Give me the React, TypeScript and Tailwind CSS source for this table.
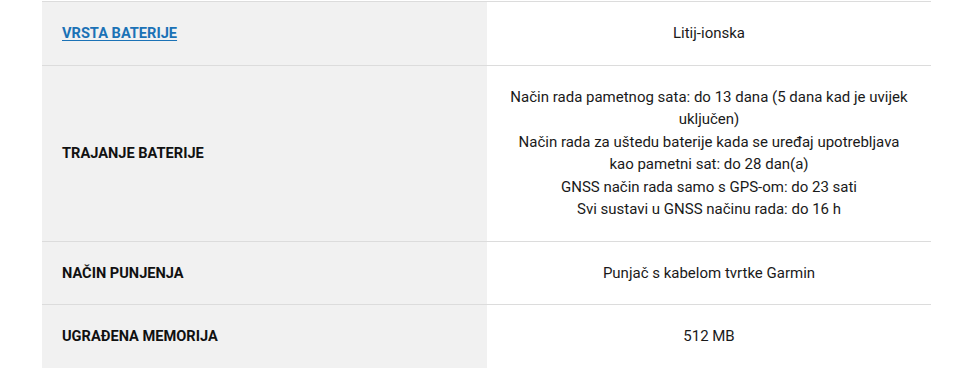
import React from "react";

const rows: { label: string; link?: boolean; value: string[] }[] = [
  { label: "Vrsta baterije", link: true, value: ["Litij-ionska"] },
  {
    label: "Trajanje baterije",
    value: [
      "Način rada pametnog sata: do 13 dana (5 dana kad je uvijek uključen)",
      "Način rada za uštedu baterije kada se uređaj upotrebljava kao pametni sat: do 28 dan(a)",
      "GNSS način rada samo s GPS-om: do 23 sati",
      "Svi sustavi u GNSS načinu rada: do 16 h",
    ],
  },
  { label: "Način punjenja", value: ["Punjač s kabelom tvrtke Garmin"] },
  { label: "Ugrađena memorija", value: ["512 MB"] },
];

export default function App() {
  return (
    <div className="w-[972px] h-[382px] bg-white pt-px" style={{ fontFamily: "Roboto, 'Liberation Sans', sans-serif" }}>
      <div className="ml-[42px] w-[889px] flex flex-col">
        {rows.map((r, i) => (
          <div
            key={i}
            className={`flex ${i === 0 ? "border-t border-[#dcdcdc]" : ""} ${i < rows.length - 1 ? "border-b border-[#dcdcdc]" : ""}`}
          >
            <div className="w-[445px] bg-[#f1f1f1] px-5 py-5 flex items-center text-[14.6px] leading-[22.5px] font-bold uppercase text-[#111]">
              {r.link ? (
                <a href="#" className="text-[#1b72b6] underline underline-offset-2">
                  {r.label}
                </a>
              ) : (
                <span>{r.label}</span>
              )}
            </div>
            <div className="w-[444px] px-5 py-5 flex flex-col items-center justify-center text-center text-[15px] leading-[22.5px] text-[#1a1a1a]">
              {r.value.map((v, j) => (
                <div key={j}>{v}</div>
              ))}
            </div>
          </div>
        ))}
      </div>
    </div>
  );
}
